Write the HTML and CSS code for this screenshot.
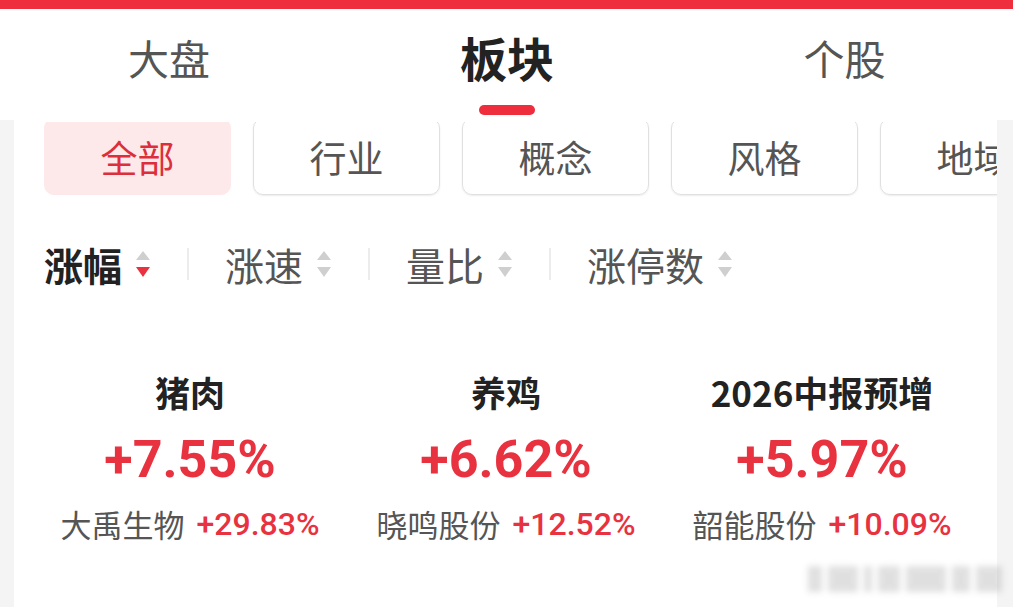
FILE: index.html
```html
<!DOCTYPE html>
<html lang="zh-CN">
<head>
  <meta charset="UTF-8">
  <title>板块行情</title>
  <link rel="stylesheet" href="styles.css">
</head>
<body>

  <div class="topbar"></div>

  <!-- 顶部切换 -->
  <div class="tabs">
    <div class="tab">大盘</div>
    <div class="tab active">板块<span class="indicator"></span></div>
    <div class="tab">个股</div>
  </div>

  <div class="panel">
    <!-- 板块分类 -->
    <div class="chip-strip">
      <div class="chips">
        <div class="chip on">全部</div>
        <div class="chip">行业</div>
        <div class="chip">概念</div>
        <div class="chip">风格</div>
        <div class="chip">地域</div>
      </div>
    </div>

    <!-- 排序 -->
    <div class="sorts">
      <div class="sort cur">涨幅
        <svg class="arr" width="18" height="32" viewBox="0 0 18 32"><polygon points="2,12 9,3 16,12" fill="#cfcfcf"/><polygon points="2,19 16,19 9,29" fill="#e8323f"/></svg>
      </div>
      <span class="sep"></span>
      <div class="sort">涨速
        <svg class="arr" width="18" height="32" viewBox="0 0 18 32"><polygon points="2,12 9,3 16,12" fill="#cfcfcf"/><polygon points="2,19 16,19 9,29" fill="#cfcfcf"/></svg>
      </div>
      <span class="sep"></span>
      <div class="sort">量比
        <svg class="arr" width="18" height="32" viewBox="0 0 18 32"><polygon points="2,12 9,3 16,12" fill="#cfcfcf"/><polygon points="2,19 16,19 9,29" fill="#cfcfcf"/></svg>
      </div>
      <span class="sep"></span>
      <div class="sort">涨停数
        <svg class="arr" width="18" height="32" viewBox="0 0 18 32"><polygon points="2,12 9,3 16,12" fill="#cfcfcf"/><polygon points="2,19 16,19 9,29" fill="#cfcfcf"/></svg>
      </div>
    </div>

    <!-- 领涨板块 -->
    <div class="cards">
      <div class="card">
        <div class="name">猪肉</div>
        <div class="pct">+7.55%</div>
        <div class="lead"><span>大禹生物</span><span class="up">+29.83%</span></div>
      </div>
      <div class="card">
        <div class="name">养鸡</div>
        <div class="pct">+6.62%</div>
        <div class="lead"><span>晓鸣股份</span><span class="up">+12.52%</span></div>
      </div>
      <div class="card">
        <div class="name">2026中报预增</div>
        <div class="pct">+5.97%</div>
        <div class="lead"><span>韶能股份</span><span class="up">+10.09%</span></div>
      </div>
    </div>
  </div>

  <div class="mark">
    <i style="width:14px"></i><i style="width:30px"></i><i style="width:8px"></i><i style="width:22px"></i><i style="width:40px"></i><i style="width:18px"></i><i style="width:26px"></i>
  </div>

</body>
</html>
```

FILE: styles.css
```css
body {
  margin: 0;
  width: 1013px;
  height: 607px;
  overflow: hidden;
  background: #f4f4f4;
  font-family: "Noto Sans CJK SC", "Noto Sans", sans-serif;
  color: #333;
  position: relative;
}
.topbar {
  height: 9px;
  background: #ee2e3c;
}
.tabs {
  display: grid;
  grid-template-columns: 338px 338px 337px;
  background: #fff;
  height: 111px;
}
.tab {
  display: flex;
  flex-direction: column;
  align-items: center;
  padding-top: 23px;
  font-size: 41px;
  line-height: 50px;
  color: #555;
}
.tab.active {
  font-size: 47px;
  font-weight: bold;
  color: #222;
}
.indicator {
  width: 56px;
  height: 10px;
  margin-top: 23px;
  border-radius: 5px;
  background: #ee2e3c;
}
.panel {
  background: #fff;
  margin: 0 16px 0 14px;
  padding: 2px 0 0 30px;
  height: 485px;
}
.chip-strip {
  height: 75px;
  overflow: hidden;
}
.chips {
  display: flex;
  gap: 22px;
  margin-top: -4px;
}
.chip {
  flex: 0 0 auto;
  width: 185px;
  height: 75px;
  border: 1px solid #e0e0e0;
  border-radius: 10px;
  box-shadow: 0 1px 2px rgba(0, 0, 0, 0.08);
  display: flex;
  align-items: center;
  justify-content: center;
  font-size: 37px;
  color: #555;
}
.chip.on {
  background: #fde9ea;
  border-color: #fde9ea;
  box-shadow: none;
  color: #dc2f3b;
}
.sorts {
  display: flex;
  align-items: center;
  margin-top: 45px;
  height: 44px;
}
.sort {
  display: flex;
  align-items: center;
  gap: 12px;
  font-size: 39px;
  line-height: 44px;
  color: #555;
}
.sort.cur {
  font-weight: bold;
  color: #222;
}
.sep {
  width: 2px;
  height: 32px;
  background: #ececec;
  margin: 0 36px 0 35px;
}
.cards {
  display: grid;
  grid-template-columns: repeat(3, 1fr);
  width: 948px;
  margin: 82px 0 0 -12px;
}
.card {
  display: flex;
  flex-direction: column;
  align-items: center;
}
.name {
  font-size: 35px;
  line-height: 48px;
  font-weight: bold;
  color: #222;
}
.pct {
  margin-top: 12px;
  font-family: Roboto, "Noto Sans", sans-serif;
  font-size: 52px;
  line-height: 64px;
  font-weight: bold;
  color: #e8323f;
}
.lead {
  margin-top: 12px;
  display: flex;
  gap: 12px;
  font-size: 31px;
  line-height: 40px;
  color: #555;
}
.lead .up {
  font-family: Roboto, "Noto Sans", sans-serif;
  font-weight: 500;
  font-size: 32px;
  color: #e8323f;
}
.mark {
  position: absolute;
  left: 808px;
  top: 566px;
  display: flex;
  gap: 6px;
  filter: blur(3px);
  opacity: 0.3;
}
.mark i {
  display: block;
  height: 26px;
  background: #999;
}
```
